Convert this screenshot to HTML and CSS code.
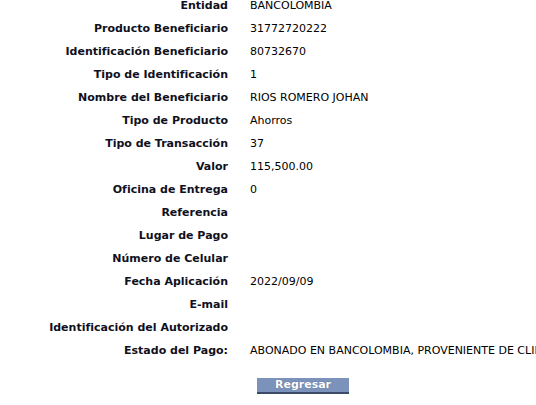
FILE: index.html
```html
<!DOCTYPE html>
<html lang="es">
<head>
  <meta charset="UTF-8">
  <title>Detalle del Pago</title>
  <link rel="stylesheet" href="styles.css">
</head>
<body>
  <div class="page">
    <div class="detalle">
      <div class="lbl">Entidad</div><div class="val">BANCOLOMBIA</div>
      <div class="lbl">Producto Beneficiario</div><div class="val">31772720222</div>
      <div class="lbl">Identificación Beneficiario</div><div class="val">80732670</div>
      <div class="lbl">Tipo de Identificación</div><div class="val">1</div>
      <div class="lbl">Nombre del Beneficiario</div><div class="val">RIOS ROMERO JOHAN</div>
      <div class="lbl">Tipo de Producto</div><div class="val">Ahorros</div>
      <div class="lbl">Tipo de Transacción</div><div class="val">37</div>
      <div class="lbl">Valor</div><div class="val">115,500.00</div>
      <div class="lbl">Oficina de Entrega</div><div class="val">0</div>
      <div class="lbl">Referencia</div><div class="val"></div>
      <div class="lbl">Lugar de Pago</div><div class="val"></div>
      <div class="lbl">Número de Celular</div><div class="val"></div>
      <div class="lbl">Fecha Aplicación</div><div class="val">2022/09/09</div>
      <div class="lbl">E-mail</div><div class="val"></div>
      <div class="lbl">Identificación del Autorizado</div><div class="val"></div>
      <div class="lbl">Estado del Pago:</div><div class="val">ABONADO EN BANCOLOMBIA, PROVENIENTE DE CLIENTE BANCOLOMBIA</div>
    </div>

    <div class="acciones">
      <button class="btn">Regresar</button>
    </div>
  </div>
</body>
</html>
```

FILE: styles.css
```css
* {
  margin: 0;
  padding: 0;
  box-sizing: border-box;
}

html, body {
  width: 100%;
  height: 100%;
  overflow: hidden;
  background: #fff;
  color: #000;
  font-family: "DejaVu Sans", Verdana, sans-serif;
  font-size: 11px;
}

.page {
  margin-top: -6px;
  white-space: nowrap;
}

/* dos columnas: etiqueta a la derecha, valor a la izquierda */
.detalle {
  display: grid;
  grid-template-columns: 228px 1fr;
  grid-auto-rows: 23px;
  column-gap: 22px;
  align-items: center;
}

.lbl {
  text-align: right;
  font-weight: bold;
  color: #101020;
}

.val {
  color: #000;
}

.acciones {
  padding-left: 257px;
  padding-top: 16px;
}

.btn {
  width: 92px;
  height: 16px;
  background: #7b93bb;
  border: none;
  border-bottom: 2px solid #3b4a66;
  color: #fff;
  font-family: inherit;
  font-size: 11px;
  font-weight: bold;
  text-shadow: 0 0 1px #4a5a7a;
  line-height: 14px;
  cursor: pointer;
}
```
